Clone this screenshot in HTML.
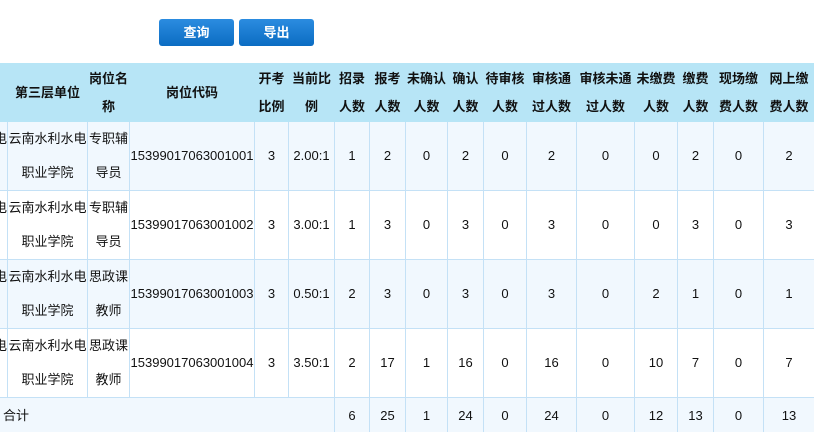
<!DOCTYPE html>
<html><head><meta charset="utf-8"><style>
body{margin:0;width:814px;height:432px;overflow:hidden;background:#fff;font-family:"Liberation Sans","Noto Sans CJK SC",sans-serif;font-size:13px;color:#111;position:relative}
.btn{position:absolute;top:19px;width:75px;height:27px;border-radius:3px;background:linear-gradient(#2b8ce0,#0b6cc2);color:#fff;font-weight:bold;font-size:13px;line-height:27px;text-align:center}
.wrap{position:absolute;left:0;top:0;width:814px;height:432px;overflow:hidden}
table{position:absolute;left:-73px;top:63px;border-collapse:collapse;table-layout:fixed;width:887px}
td,th{padding:0;text-align:center;white-space:nowrap;overflow:hidden;border:1px solid #c4e1f6}
th{background:#b7e5f6;font-weight:bold;line-height:28px;height:57px;border-color:#b7e5f6}
td{line-height:34px}
tr.a td{background:#f1f8fe}
tr.b td{background:#fff}
.f{text-align:right}
</style></head><body>
<div class="btn" style="left:159px">查询</div>
<div class="btn" style="left:239px">导出</div>
<div class="wrap">
<table>
<colgroup><col style="width:80px"><col style="width:80px"><col style="width:42px"><col style="width:125px"><col style="width:34px"><col style="width:46px"><col style="width:35px"><col style="width:36px"><col style="width:42px"><col style="width:36px"><col style="width:43px"><col style="width:50px"><col style="width:58px"><col style="width:43px"><col style="width:36px"><col style="width:50px"><col style="width:51px"></colgroup>
<tr><th></th><th>第三层单位</th><th>岗位名<br>称</th><th>岗位代码</th><th>开考<br>比例</th><th>当前比<br>例</th><th>招录<br>人数</th><th>报考<br>人数</th><th>未确认<br>人数</th><th>确认<br>人数</th><th>待审核<br>人数</th><th>审核通<br>过人数</th><th>审核未通<br>过人数</th><th>未缴费<br>人数</th><th>缴费<br>人数</th><th>现场缴<br>费人数</th><th>网上缴<br>费人数</th></tr>
<tr class="a" style="height:68px"><td class="f">水利水电<br>&nbsp;</td><td>云南水利水电<br>职业学院</td><td>专职辅<br>导员</td><td>15399017063001001</td><td>3</td><td>2.00:1</td><td>1</td><td>2</td><td>0</td><td>2</td><td>0</td><td>2</td><td>0</td><td>0</td><td>2</td><td>0</td><td>2</td></tr>
<tr class="b" style="height:69px"><td class="f">水利水电<br>&nbsp;</td><td>云南水利水电<br>职业学院</td><td>专职辅<br>导员</td><td>15399017063001002</td><td>3</td><td>3.00:1</td><td>1</td><td>3</td><td>0</td><td>3</td><td>0</td><td>3</td><td>0</td><td>0</td><td>3</td><td>0</td><td>3</td></tr>
<tr class="a" style="height:69px"><td class="f">水利水电<br>&nbsp;</td><td>云南水利水电<br>职业学院</td><td>思政课<br>教师</td><td>15399017063001003</td><td>3</td><td>0.50:1</td><td>2</td><td>3</td><td>0</td><td>3</td><td>0</td><td>3</td><td>0</td><td>2</td><td>1</td><td>0</td><td>1</td></tr>
<tr class="b" style="height:68px"><td class="f">水利水电<br>&nbsp;</td><td>云南水利水电<br>职业学院</td><td>思政课<br>教师</td><td>15399017063001004</td><td>3</td><td>3.50:1</td><td>2</td><td>17</td><td>1</td><td>16</td><td>0</td><td>16</td><td>0</td><td>10</td><td>7</td><td>0</td><td>7</td></tr>
<tr class="a" style="height:36px"><td colspan="6" style="text-align:left;padding-left:75px">合计</td><td>6</td><td>25</td><td>1</td><td>24</td><td>0</td><td>24</td><td>0</td><td>12</td><td>13</td><td>0</td><td>13</td></tr>
</table>
</div>
</body></html>
